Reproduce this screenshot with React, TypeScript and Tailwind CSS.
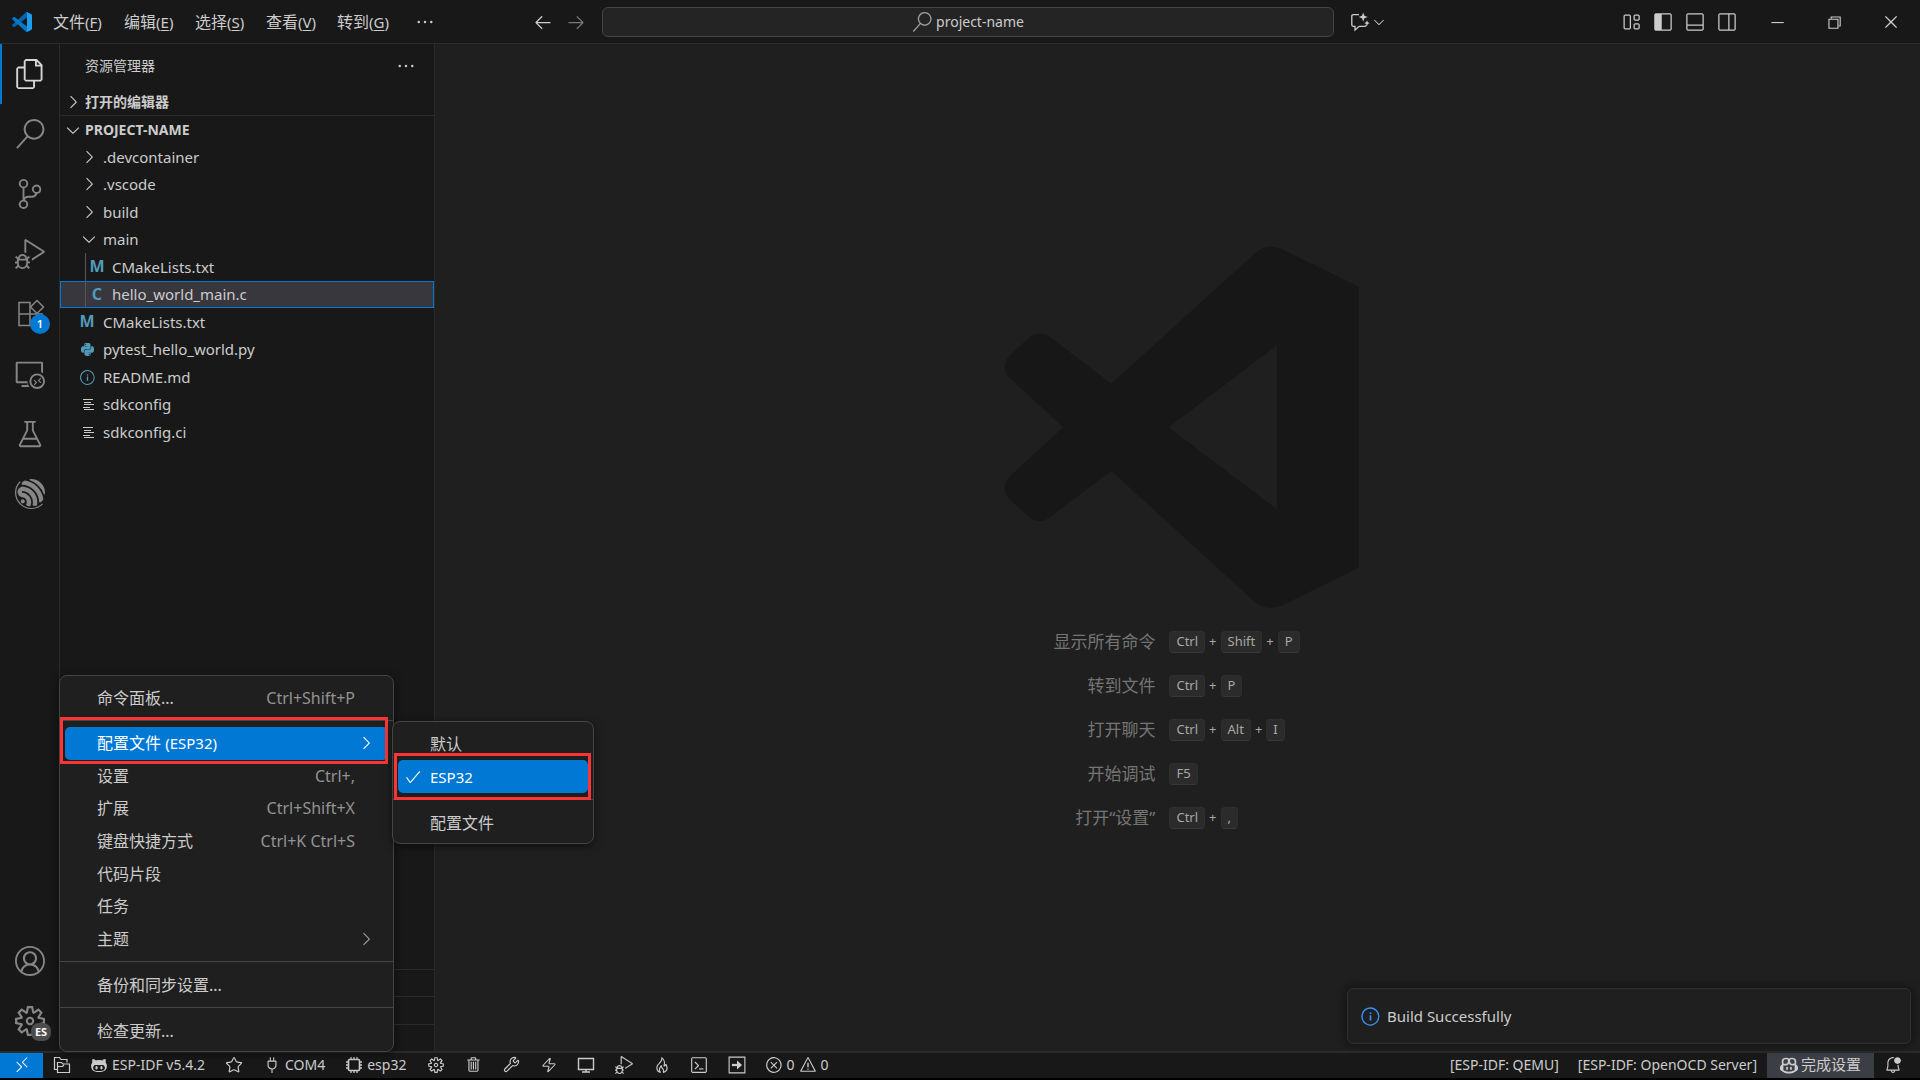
import React from "react";
import type { ReactNode } from "react";
import clsx from "clsx";
import {
  VscAccount,
  VscArrowLeft,
  VscArrowRight,
  VscBeaker,
  VscBellDot,
  VscCheck,
  VscChevronDown,
  VscChevronRight,
  VscChromeClose,
  VscChromeMinimize,
  VscChromeRestore,
  VscCopilot,
  VscDebugAlt,
  VscEllipsis,
  VscError,
  VscFiles,
  VscFlame,
  VscGear,
  VscInfo,
  VscLayout,
  VscLayoutPanelOff,
  VscLayoutSidebarLeft,
  VscLayoutSidebarRightOff,
  VscOctoface,
  VscPlug,
  VscRemote,
  VscRemoteExplorer,
  VscSearch,
  VscSettingsGear,
  VscSourceControl,
  VscTerminal,
  VscTrash,
  VscWarning,
} from "react-icons/vsc";
import { Star, Wrench, Zap } from "lucide-react";
import { SiEspressif } from "react-icons/si";
import { FaPython } from "react-icons/fa";

const menus = [
  { label: "文件", key: "F" },
  { label: "编辑", key: "E" },
  { label: "选择", key: "S" },
  { label: "查看", key: "V" },
  { label: "转到", key: "G" },
];

const Logo = () => (
  <svg viewBox="0 0 100 100" className="size-5">
    <path d="M96.5 10.7 75.9.8c-2.4-1.1-5.2-.7-7.1 1.2L1.3 63.2c-1.8 1.7-1.8 4.5 0 6.1l5.5 5c1.5 1.4 3.7 1.5 5.3.2L93.4 13.4c2.7-2.1 6.6-.1 6.6 3.3V16.4c0-2.4-1.4-4.6-3.5-5.7Z" fill="#0065a9" />
    <path d="m96.5 89.3-20.6 9.9c-2.4 1.1-5.2.7-7.1-1.2L1.3 36.8c-1.8-1.7-1.8-4.5 0-6.1l5.5-5c1.5-1.4 3.7-1.5 5.3-.2l81.3 61.1c2.7 2.1 6.6.1 6.6-3.3v.3c0 2.4-1.4 4.6-3.5 5.7Z" fill="#007acc" />
    <path d="M75.9 99.1c-2.4 1.1-5.2.7-7.1-1.2 2.3 2.3 6.2.7 6.2-2.6V4.7c0-3.3-3.9-4.9-6.2-2.6 1.9-1.9 4.7-2.3 7.1-1.2l20.6 9.9c2.1 1 3.5 3.2 3.5 5.6v67.1c0 2.4-1.4 4.6-3.5 5.6L75.9 99.1Z" fill="#1f9cf0" />
  </svg>
);

const ChatSparkle = () => (
  <svg viewBox="0 0 20 20" className="size-5" fill="none" stroke="currentColor" strokeWidth="1.3">
    <path d="M9 2.6H3.5Q1.8 2.6 1.8 4.3v8.4q0 1.6 1.7 1.6H5v3.8l4.2-3.8h5.3q1.8 0 1.8-1.6" />
    <path d="m13.2.5 1.2 3.3 3.3 1.2-3.3 1.2-1.2 3.3L12 6.2 8.7 5 12 3.8ZM17 8.3l.8 2 2 .8-2 .8-.8 2-.8-2-2-.8 2-.8Z" fill="currentColor" stroke="none" />
  </svg>
);

const Extensions = () => (
  <svg viewBox="0 0 30 30" className="size-[30px]" fill="none" stroke="currentColor" strokeWidth="1.5">
    <path d="M4 3.500h11v23H4zM4 15h23v11.500H4z" />
    <path d="m22 1.500 6.500 6.500-6.500 6.500L15.500 8z" fill="#181818" />
  </svg>
);

const Folders = () => (
  <svg viewBox="0 0 18 18" className="size-[18px]" fill="none" stroke="currentColor" strokeWidth="1.2">
    <path d="M4.500 13.500h-3v-12h5l1.500 2h6v3" />
    <path d="M4.500 16.500v-10h4l1.500 1.500h6.500v8.500zM4.500 10.500h5l1.500-1.500" />
  </svg>
);

const Chip = () => (
  <svg viewBox="0 0 18 18" className="size-[18px]" fill="none" stroke="currentColor">
    <rect x="3.500" y="3.500" width="11" height="11" rx="1" strokeWidth="1.6" />
    <path d="M6 1v2M9 1v2M12 1v2M6 15v2M9 15v2M12 15v2M1 6h2M1 9h2M1 12h2M15 6h2M15 9h2M15 12h2" strokeWidth="1.3" />
  </svg>
);

const Monitor = () => (
  <svg viewBox="0 0 18 18" className="size-[18px]" fill="none" stroke="currentColor" strokeWidth="1.4">
    <path d="M1.500 2.500h15v11h-15zM5 16h8M9 13.500V16" />
  </svg>
);

const ArrowBox = () => (
  <svg viewBox="0 0 16 16" className="size-[18px]" fill="none" stroke="currentColor">
    <path d="M1 1h14v14H1z" />
    <path d="M3.5 8h7" strokeWidth="2" />
    <path d="M8 4v8l4.5-4z" fill="currentColor" stroke="none" />
  </svg>
);

const Lines = () => (
  <svg viewBox="0 0 12 13" className="ml-1 h-[13px] w-3" stroke="#cccccc">
    <path d="M0 1.500h10M1 4.500h7M1 6.500h10M0 9.500h7M1 11.500h10" />
  </svg>
);

const TitleBar = () => (
  <header className="flex h-11 shrink-0 items-center border-b border-[#2b2b2b] pl-4">
    <div className="flex flex-1 items-center">
      <div className="-ml-1 w-[34px]">
        <Logo />
      </div>
      <nav className="flex flex-1 items-center">
        {menus.map((m) => (
          <button key={m.key} className="w-[71px] pl-[7px] text-left text-[16px]">
            {m.label}
            <span className="text-[15px]">
              (<u className="underline-offset-2">{m.key}</u>)
            </span>
          </button>
        ))}
        <button aria-label="更多菜单" className="pl-[14px]">
          <VscEllipsis className="size-5" />
        </button>
      </nav>
      <div className="flex gap-[13px] pr-4">
        <button aria-label="后退">
          <VscArrowLeft className="size-5" />
        </button>
        <button aria-label="前进" className="text-[#7a7a7a]">
          <VscArrowRight className="size-5" />
        </button>
      </div>
    </div>
    <button className="flex h-[30px] w-[732px] items-center justify-center gap-1 rounded-md border border-[#454545] bg-[#242424] text-[14px]">
      <VscSearch className="size-5 text-[#a0a0a0]" />
      project-name
    </button>
    <div className="flex flex-1 items-center justify-between">
      <button aria-label="聊天" className="flex items-center pl-4">
        <ChatSparkle />
        <VscChevronDown className="ml-px size-4" />
      </button>
      <div className="flex items-center">
        <div className="flex gap-3 pr-[11px]">
          <button aria-label="自定义布局"><VscLayout className="size-5" /></button>
          <button aria-label="切换主侧栏"><VscLayoutSidebarLeft className="size-5" /></button>
          <button aria-label="切换面板"><VscLayoutPanelOff className="size-5" /></button>
          <button aria-label="切换辅助侧栏"><VscLayoutSidebarRightOff className="size-5" /></button>
        </div>
        <button aria-label="最小化" className="flex w-[57px] justify-center"><VscChromeMinimize className="size-[18px]" /></button>
        <button aria-label="还原" className="flex w-[57px] justify-center"><VscChromeRestore className="size-[18px]" /></button>
        <button aria-label="关闭" className="flex w-[58px] justify-center"><VscChromeClose className="size-[18px]" /></button>
      </div>
    </div>
  </header>
);

type ActivityProps = { label: string; icon: ReactNode; active?: boolean; badge?: ReactNode };

const Activity = ({ label, icon, active, badge }: ActivityProps) => (
  <button
    aria-label={label}
    className={clsx(
      "relative flex h-[60px] w-full items-center justify-center border-l-2 pr-[2px] text-[30px]",
      active ? "border-[#0078d4] text-[#d7d7d7]" : "border-transparent text-[#868686]",
    )}
  >
    {icon}
    {badge}
  </button>
);

const ActivityBar = () => (
  <aside className="flex w-[60px] shrink-0 flex-col justify-between border-r border-[#2b2b2b]">
    <div>
      <Activity label="资源管理器" icon={<VscFiles />} active />
      <Activity label="搜索" icon={<VscSearch />} />
      <Activity label="源代码管理" icon={<VscSourceControl />} />
      <Activity label="运行和调试" icon={<VscDebugAlt />} />
      <Activity
        label="扩展"
        icon={<Extensions />}
        badge={
          <span className="absolute right-[9px] bottom-[10px] flex size-5 items-center justify-center rounded-full bg-[#0078d4] text-[11px] font-semibold text-white">
            1
          </span>
        }
      />
      <Activity label="远程资源管理器" icon={<VscRemoteExplorer />} />
      <Activity label="测试" icon={<VscBeaker />} />
      <Activity label="ESP-IDF" icon={<SiEspressif />} />
    </div>
    <div>
      <Activity label="帐户" icon={<VscAccount />} />
      <Activity
        label="管理"
        icon={<VscSettingsGear />}
        badge={
          <span className="absolute right-2 bottom-[10px] flex h-[18px] w-5 items-center justify-center rounded-lg bg-[#4d4d4d] text-[11px] font-bold text-white">
            ES
          </span>
        }
      />
    </div>
  </aside>
);

const Letter = ({ children }: { children: ReactNode }) => (
  <b className="pb-[2px] text-[16px] leading-none text-[#519aba]">{children}</b>
);

type Entry = { name: string; kind: "closed" | "open" | "file"; icon?: ReactNode; nested?: boolean; selected?: boolean };

const entries: Entry[] = [
  { name: ".devcontainer", kind: "closed" },
  { name: ".vscode", kind: "closed" },
  { name: "build", kind: "closed" },
  { name: "main", kind: "open" },
  { name: "CMakeLists.txt", kind: "file", icon: <Letter>M</Letter>, nested: true },
  { name: "hello_world_main.c", kind: "file", icon: <Letter>C</Letter>, nested: true, selected: true },
  { name: "CMakeLists.txt", kind: "file", icon: <Letter>M</Letter> },
  { name: "pytest_hello_world.py", kind: "file", icon: <FaPython className="size-[15px] text-[#519aba]" /> },
  { name: "README.md", kind: "file", icon: <VscInfo className="size-[17px] text-[#519aba]" /> },
  { name: "sdkconfig", kind: "file", icon: <Lines /> },
  { name: "sdkconfig.ci", kind: "file", icon: <Lines /> },
];

const TreeRow = ({ name, kind, icon, nested, selected }: Entry) => (
  <li className="flex flex-1">
    <button
      className={clsx(
        "flex flex-1 items-center border text-[15px]",
        selected ? "border-[#0078d4] bg-[#37373d]" : "border-transparent",
        nested ? "pl-6" : "pl-[14px]",
      )}
    >
      {nested && <span className="-my-px self-stretch border-l border-[#585858]" />}
      <span className={clsx("flex shrink-0 items-center justify-center pr-1", nested ? "w-[26px]" : "w-7")}>
        {kind === "closed" && <VscChevronRight className="ml-1 size-5 shrink-0" />}
        {kind === "open" && <VscChevronDown className="ml-1 size-5 shrink-0" />}
        {icon}
      </span>
      {name}
    </button>
  </li>
);

const Sidebar = () => (
  <section className="flex w-[375px] shrink-0 flex-col border-r border-[#2b2b2b]">
    <div className="flex h-11 items-center justify-between pr-[18px] pl-[25px]">
      <h2 className="pb-[2px] text-[14px]">资源管理器</h2>
      <button aria-label="更多操作">
        <VscEllipsis className="size-5" />
      </button>
    </div>
    <button className="flex h-[27px] items-center pl-[3px] text-[14px] font-bold">
      <VscChevronRight className="mr-[2px] size-5" />
      打开的编辑器
    </button>
    <button className="flex h-7 items-center border-t border-[#2b2b2b] pl-[3px] text-[14px] font-bold">
      <VscChevronDown className="mr-[2px] size-5" />
      PROJECT-NAME
    </button>
    <ul className="flex h-[303px] flex-col">
      {entries.map((e, i) => (
        <TreeRow key={i} {...e} />
      ))}
    </ul>
    <div className="mt-auto">
      <div className="h-[27px] border-t border-[#2b2b2b]" />
      <div className="h-7 border-t border-[#2b2b2b]" />
      <div className="h-[27px] border-t border-[#2b2b2b]" />
    </div>
  </section>
);

const shortcuts = [
  { label: "显示所有命令", keys: ["Ctrl", "Shift", "P"] },
  { label: "转到文件", keys: ["Ctrl", "P"] },
  { label: "打开聊天", keys: ["Ctrl", "Alt", "I"] },
  { label: "开始调试", keys: ["F5"] },
  { label: "打开“设置”", keys: ["Ctrl", ","] },
];

const Watermark = () => (
  <main className="flex flex-1 flex-col items-center justify-center bg-[#1f1f1f] pr-[2px] pb-[10px]">
    <svg viewBox="45 76 1092 1092" className="size-[364px]" fill="#171717">
      <path
        fillRule="evenodd"
        d="M394 492 826 100Q856 72 900 86L1137 201V1044L904 1158Q860 1175 824 1146L394 754 210 892Q178 916 147 891L88 838Q60 806 88 772L250 623 88 474Q60 442 88 408L147 355Q178 330 210 352ZM891 377 566 623 891 869Z"
      />
    </svg>
    <div className="mt-[11px] grid grid-cols-[auto_auto] gap-x-[14px]">
      {shortcuts.map((s) => (
        <React.Fragment key={s.label}>
          <span className="flex h-11 items-center justify-end text-[17px] text-[#757575]">{s.label}</span>
          <span className="flex h-11 items-center gap-1 text-[13px] text-[#a8a8a8]">
            {s.keys.map((k, i) => (
              <React.Fragment key={k}>
                {i > 0 && <span>+</span>}
                <kbd className="flex h-[22px] items-center rounded border border-[#2f2f2f] border-b-[#383838] bg-[#2b2b2b] px-[6px] font-[inherit]">
                  {k}
                </kbd>
              </React.Fragment>
            ))}
          </span>
        </React.Fragment>
      ))}
    </div>
  </main>
);

type ItemProps = { label: ReactNode; hint?: string; sub?: boolean; active?: boolean; checked?: boolean };

const MenuItem = ({ label, hint, sub, active, checked }: ItemProps) => (
  <button
    role="menuitem"
    className={clsx(
      "mx-[5px] flex min-h-8 items-center rounded-[5px] text-[16px]",
      active && "bg-[#0078d4] text-white",
    )}
  >
    <span className="flex w-8 shrink-0 justify-center pr-[2px]">{checked && <VscCheck className="size-[18px]" />}</span>
    <span className="flex-1 text-left">{label}</span>
    {hint && <span className="pr-[33px] text-[#939393]">{hint}</span>}
    {sub && <VscChevronRight className={clsx("mr-3 size-5", !active && "text-[#a0a0a0]")} />}
  </button>
);

const Separator = () => <hr className="my-[6px] border-t border-[#454545]" />;

const ManageMenu = () => (
  <div
    role="menu"
    className="absolute -bottom-px left-[59px] z-10 flex w-[335px] flex-col rounded-lg border border-[#454545] bg-[#1f1f1f] pt-[5px] pb-1 shadow-[0_2px_8px_#00000080]"
  >
    <div className="grid h-[33px]">
      <MenuItem label="命令面板..." hint="Ctrl+Shift+P" />
    </div>
    <Separator />
    <div className="grid h-[228px] auto-rows-fr">
      <MenuItem label={<>配置文件 <span className="text-[15px]">(ESP32)</span></>} sub active />
      <MenuItem label="设置" hint="Ctrl+," />
      <MenuItem label="扩展" hint="Ctrl+Shift+X" />
      <MenuItem label="键盘快捷方式" hint="Ctrl+K Ctrl+S" />
      <MenuItem label="代码片段" />
      <MenuItem label="任务" />
      <MenuItem label="主题" sub />
    </div>
    <Separator />
    <div className="grid h-[33px]">
      <MenuItem label="备份和同步设置..." />
    </div>
    <Separator />
    <div className="grid h-[33px]">
      <MenuItem label="检查更新..." />
    </div>
    <div className="pointer-events-none absolute top-[41px] left-0 h-[47px] w-[328px] border-3 border-[#fb3535]" />
  </div>
);

const ProfileMenu = () => (
  <div
    role="menu"
    className="absolute bottom-[207px] left-[392px] z-10 flex w-[202px] flex-col rounded-lg border border-[#454545] bg-[#1f1f1f] pt-[5px] pb-1 shadow-[0_2px_8px_#00000080]"
  >
    <div className="grid h-[66px] auto-rows-fr">
      <MenuItem label="默认" />
      <MenuItem label={<span className="text-[15px]">ESP32</span>} active checked />
    </div>
    <Separator />
    <div className="grid h-[33px]">
      <MenuItem label="配置文件" />
    </div>
    <div className="pointer-events-none absolute top-[31px] left-px h-[47px] w-[197px] border-3 border-[#fb3535]" />
  </div>
);

const Notification = () => (
  <div
    role="status"
    className="absolute right-[9px] bottom-[7px] flex h-14 w-[564px] items-center gap-[6px] rounded-md border border-[#303030] bg-[#1f1f1f] pl-3 text-[15px] shadow-[0_0_8px_2px_#00000060]"
  >
    <VscInfo className="size-[21px] text-[#3794ff]" />
    Build Successfully
  </div>
);

const tools = [
  { label: "SDK 配置编辑器", icon: <VscGear /> },
  { label: "完全清理", icon: <VscTrash /> },
  { label: "构建项目", icon: <Wrench className="size-[17px]" strokeWidth={1.6} /> },
  { label: "烧录", icon: <Zap className="size-4" strokeWidth={1.6} /> },
  { label: "监视设备", icon: <Monitor /> },
  { label: "调试", icon: <VscDebugAlt /> },
  { label: "构建、烧录和监视", icon: <VscFlame /> },
  { label: "打开终端", icon: <VscTerminal /> },
  { label: "执行自定义任务", icon: <ArrowBox /> },
];

const StatusBar = () => (
  <footer className="flex h-[27px] shrink-0 items-stretch justify-between border-t-2 border-[#2b2b2b] text-[14px]">
    <div className="flex items-stretch">
      <button aria-label="打开远程窗口" className="flex w-[43px] items-center justify-center bg-[#0078d4] pb-[2px] text-white">
        <VscRemote className="size-[18px]" />
      </button>
      <button aria-label="选择项目" className="flex w-[38px] items-center justify-center pb-[2px]">
        <Folders />
      </button>
      <button className="flex items-center gap-1 pb-[2px] pl-[9px]">
        <VscOctoface className="size-[18px]" />
        ESP-IDF v5.4.2
      </button>
      <button aria-label="选择烧录方式" className="flex items-center pb-[2px] pl-5">
        <Star className="size-[18px]" strokeWidth={1.6} />
      </button>
      <button className="flex items-center gap-1 pb-[2px] pl-5">
        <VscPlug className="size-[18px]" />
        COM4
      </button>
      <button className="flex items-center gap-1 pb-[2px] pl-5">
        <Chip />
        esp32
      </button>
      <div className="ml-[11px] grid w-[338px] grid-cols-9 pb-[2px]">
        {tools.map((t) => (
          <button key={t.label} aria-label={t.label} className="flex items-center justify-center text-[18px]">
            {t.icon}
          </button>
        ))}
      </div>
      <button className="flex items-center gap-[3px] pb-[2px] pl-[10px]">
        <VscError className="size-[18px]" />0
        <VscWarning className="ml-[2px] size-[18px]" />0
      </button>
    </div>
    <div className="flex items-stretch">
      <button className="px-[11px] pb-[2px]">[ESP-IDF: QEMU]</button>
      <button className="pr-[10px] pl-2 pb-[2px]">[ESP-IDF: OpenOCD Server]</button>
      <button className="flex w-[107px] items-center justify-center gap-[3px] bg-[#3b3e44] pb-[2px] text-[15px]">
        <VscCopilot className="size-[18px]" />
        完成设置
      </button>
      <button aria-label="通知" className="flex w-[46px] items-center pb-[2px] pl-[10px]">
        <VscBellDot className="size-[18px]" />
      </button>
    </div>
  </footer>
);

export default function App() {
  return (
    <div className="h-screen bg-black pb-[2px] font-['Noto_Sans','Noto_Sans_CJK_SC',sans-serif] text-[#cccccc]">
      <div className="flex h-full flex-col bg-[#181818]">
        <TitleBar />
        <div className="relative flex min-h-0 flex-1">
          <ActivityBar />
          <Sidebar />
          <Watermark />
          <ManageMenu />
          <ProfileMenu />
          <Notification />
        </div>
        <StatusBar />
      </div>
    </div>
  );
}
